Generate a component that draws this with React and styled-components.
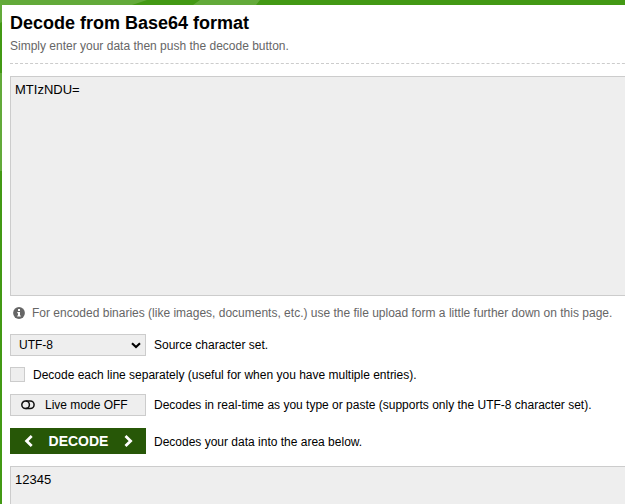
import React from "react";
import styled, { createGlobalStyle } from "styled-components";

const GlobalStyle = createGlobalStyle`
  *, *::before, *::after { box-sizing: border-box; }
  body {
    margin: 0;
    overflow: hidden;
    background: #439914;
    color: #000;
    font: 12px/16px "Liberation Sans", Arial, sans-serif;
  }
`;

const Page = styled.div`
  display: grid;
  height: 504px;
  width: 625px;
  overflow: hidden;
`;

const Backdrop = styled.svg`
  grid-area: 1 / 1;
  display: block;
`;

const Panel = styled.main`
  grid-area: 1 / 1;
  margin: 5px 0 0 2px;
  padding: 0 0 0 8px;
  background: #fff;
  min-width: 0;
  height: 499px;
  overflow: hidden;
`;

const Header = styled.header`
  height: 59px;
  padding-top: 7px;
  border-bottom: 1px dashed #ccc;
  width: 640px;
`;

const Title = styled.h1`
  margin: 0;
  font-size: 18px;
  line-height: 22px;
  font-weight: bold;
`;

const Subtitle = styled.p`
  margin: 4px 0 0;
  color: #666;
`;

const TextArea = styled.textarea`
  display: block;
  width: 640px;
  height: ${(p) => p.$height}px;
  margin: 12px 0 0;
  padding: 5px 4px;
  border: 1px solid #ccc;
  border-radius: 0;
  outline: 0;
  resize: none;
  background: #eee;
  color: #000;
  font: 13px/16px "Liberation Sans", Arial, sans-serif;
`;

const Hint = styled.div`
  display: flex;
  align-items: center;
  gap: 7px;
  height: 16px;
  margin: 9px 0 13px;
  padding-left: 3px;
  color: #666;
  white-space: nowrap;
`;

const Row = styled.div`
  display: flex;
  align-items: center;
  gap: 8px;
  height: ${(p) => p.$height || 22}px;
  margin-bottom: ${(p) => p.$after || 12}px;
  white-space: nowrap;
`;

const Control = styled.button`
  display: flex;
  align-items: center;
  flex: none;
  width: 136px;
  height: 22px;
  padding: 0 4px 0 8px;
  border: 1px solid #ccc;
  background: #eee;
  color: #000;
  font: inherit;
`;

const SelectControl = styled(Control)`
  justify-content: space-between;
`;

const ToggleControl = styled(Control)`
  padding-left: 10px;
  gap: 10px;
`;

const DecodeButton = styled(Control)`
  height: 26px;
  padding: 0 13px 0 14px;
  justify-content: space-between;
  border: 0;
  background: #275707;
  color: #fff;
  font-size: 14px;
  font-weight: bold;
`;

const Checkbox = styled.span`
  flex: none;
  width: 15px;
  height: 15px;
  border: 1px solid #ccc;
  background: #eee;
`;

const Label = styled.span`
  padding-top: ${(p) => p.$drop || 0}px;
`;

const Icon = styled.svg`
  display: block;
  flex: none;
`;

function Chevron({ d }) {
  return (
    <Icon width="9" height="12" viewBox="0 0 9 12" fill="none" stroke="currentColor" strokeWidth="2.8">
      <path d={d} />
    </Icon>
  );
}

export default function App() {
  return (
    <>
      <GlobalStyle />
      <Page>
        <Backdrop width="625" height="504">
          <rect width="625" height="504" fill="#439914" />
          <path d="M0 0H147L132 5H2V22L0 23ZM200 0H260L256 5H193ZM0 73H2V171H0Z" fill="#63aa3a" />
        </Backdrop>
        <Panel>
          <Header>
            <Title>Decode from Base64 format</Title>
            <Subtitle>Simply enter your data then push the decode button.</Subtitle>
          </Header>
          <TextArea $height={220} defaultValue="MTIzNDU=" spellCheck={false} />
          <Hint>
            <Icon width="12" height="12" viewBox="0 0 12 12">
              <circle cx="6" cy="6" r="5.9" fill="#666" />
              <path d="M5 2H7V4H5ZM4.3 5H7V8.4H7.8V9.6H4.2V8.4H5V6.2H4.3Z" fill="#fff" />
            </Icon>
            <Label>For encoded binaries (like images, documents, etc.) use the file upload form a little further down on this page.</Label>
          </Hint>
          <Row $after={11}>
            <SelectControl type="button">
              UTF-8
              <Icon width="10" height="7" viewBox="0 0 10 7" fill="none" stroke="#000" strokeWidth="2.1">
                <path d="M1 1.2L5 5L9 1.2" />
              </Icon>
            </SelectControl>
            <Label>Source character set.</Label>
          </Row>
          <Row $height={15}>
            <Checkbox role="checkbox" aria-checked="false" />
            <Label>Decode each line separately (useful for when you have multiple entries).</Label>
          </Row>
          <Row>
            <ToggleControl type="button">
              <Icon width="14" height="10" viewBox="0 0 14 10" fill="none" stroke="#111" strokeWidth="1.5">
                <path d="M4.7 1H9.3A3.8 3.8 0 0 1 9.3 8.6H4.7" />
                <circle cx="4.6" cy="4.8" r="3.8" />
              </Icon>
              <Label>Live mode OFF</Label>
            </ToggleControl>
            <Label>Decodes in real-time as you type or paste (supports only the UTF-8 character set).</Label>
          </Row>
          <Row $height={26}>
            <DecodeButton type="button">
              <Chevron d="M7.7 1L2.6 6L7.7 11" />
              DECODE
              <Chevron d="M1.5 1L6.6 6L1.5 11" />
            </DecodeButton>
            <Label $drop={2}>Decodes your data into the area below.</Label>
          </Row>
          <TextArea $height={80} readOnly value="12345" />
        </Panel>
      </Page>
    </>
  );
}
